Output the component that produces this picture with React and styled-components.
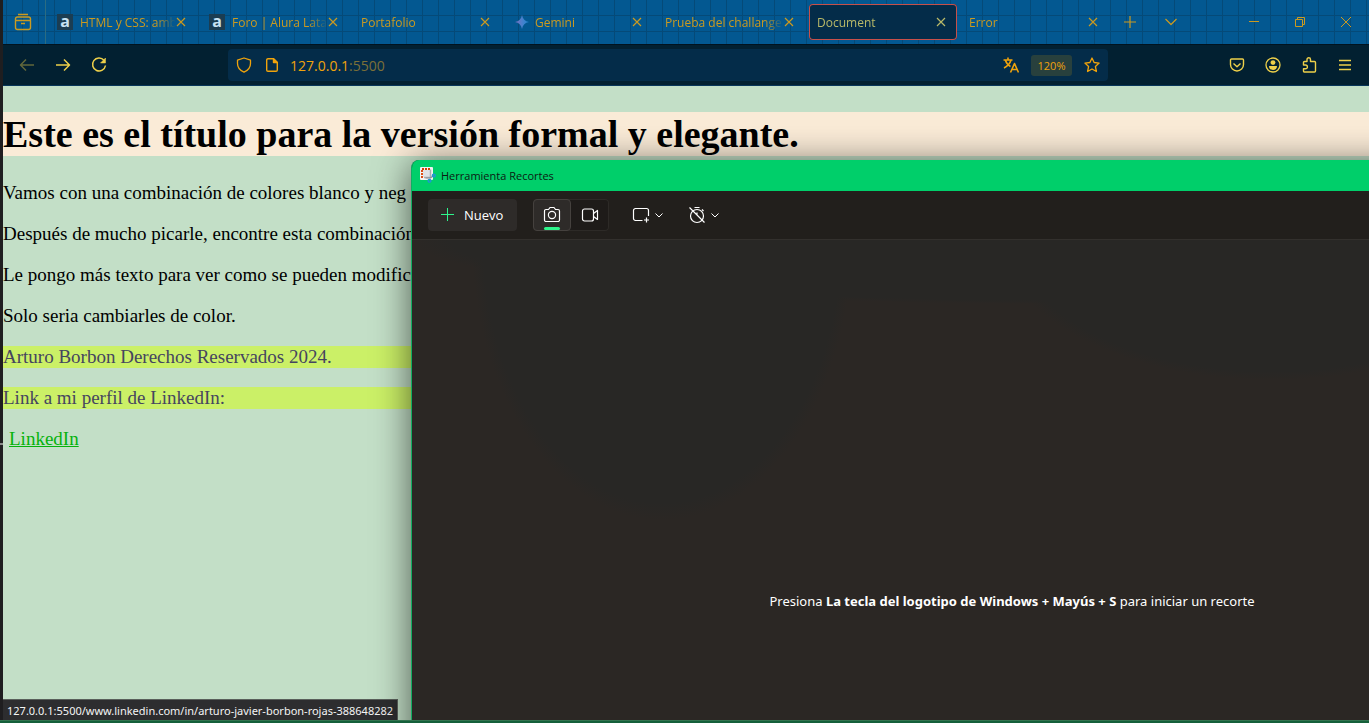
import styled, { createGlobalStyle, css } from "styled-components";

const ui = `"Open Sans", "Noto Sans", sans-serif`;
const uiWide = `"Noto Sans", "Open Sans", sans-serif`;

// 브라우저 탭 목록
const tabs = [
    { id: 1, title: "HTML y CSS: amb", icon: "alura" },
    { id: 2, title: "Foro | Alura Latam", icon: "alura" },
    { id: 3, title: "Portafolio" },
    { id: 4, title: "Gemini", icon: "gemini" },
    { id: 5, title: "Prueba del challange" },
    { id: 6, title: "Document", active: true },
    { id: 7, title: "Error" },
];

function App() {
    return (
        <Desktop>
            <GlobalStyle />
            <Edge />
            <Screen>
                <Browser />
                <SnippingTool />
            </Screen>
            <Taskbar />
        </Desktop>
    );
}

function Browser() {
    return (
        <BrowserWindow>
            <TabBar>
                <ArchiveButton aria-label="Firefox View">
                    <Icon $size={18} $width={1.4} viewBox="0 0 18 18">
                        <path d="M4 1.500h10M1.500 7V6a2 2 0 0 1 2-2h11a2 2 0 0 1 2 2v1M1.500 7.500v7a2 2 0 0 0 2 2h11a2 2 0 0 0 2-2v-7zM7 10.500h4" />
                    </Icon>
                </ArchiveButton>

                <Tabs>
                    {tabs.map((tab) => (
                        <Tab key={tab.id} $active={tab.active}>
                            {tab.icon === "alura" && <AluraIcon>a</AluraIcon>}
                            {tab.icon === "gemini" && <GeminiIcon />}
                            <TabTitle>{tab.title}</TabTitle>
                            <TabClose aria-label="Cerrar">
                                <Icon $size={10} viewBox="0 0 10 10">
                                    <path d="M1 1l8 8M9 1l-8 8" />
                                </Icon>
                            </TabClose>
                        </Tab>
                    ))}
                </Tabs>

                <TabButton aria-label="Nueva pestaña">
                    <Icon $size={12} viewBox="0 0 12 12">
                        <path d="M6 0v12M0 6h12" />
                    </Icon>
                </TabButton>
                <TabButton aria-label="Lista de pestañas">
                    <Icon $size={12} viewBox="0 0 12 12">
                        <path d="M0.500 3l5.500 5.500l5.500-5.500" />
                    </Icon>
                </TabButton>

                <WindowButtons>
                    <WindowButton aria-label="Minimizar">
                        <Icon $size={10} $width={1} viewBox="0 0 10 10">
                            <path d="M0 4.500h10" />
                        </Icon>
                    </WindowButton>
                    <WindowButton aria-label="Restaurar">
                        <Icon $size={10} $width={1} viewBox="0 0 10 10">
                            <path d="M0.500 2.500h7v7h-7zM2.500 2.500v-2h7v7h-2" />
                        </Icon>
                    </WindowButton>
                    <WindowButton aria-label="Cerrar ventana">
                        <Icon $size={10} $width={1} viewBox="0 0 10 10">
                            <path d="M0 0l10 10M10 0L0 10" />
                        </Icon>
                    </WindowButton>
                </WindowButtons>
            </TabBar>

            <Toolbar>
                <ToolButton aria-label="Atrás" disabled>
                    <Icon $size={16} $width={1.5} viewBox="0 0 16 16">
                        <path d="M15 8H1.500M7 2.500L1.500 8L7 13.500" />
                    </Icon>
                </ToolButton>
                <ToolButton aria-label="Adelante">
                    <Icon $size={16} $width={1.5} viewBox="0 0 16 16">
                        <path d="M1 8h13.500M9 2.500L14.500 8L9 13.500" />
                    </Icon>
                </ToolButton>
                <ToolButton aria-label="Recargar">
                    <Icon $size={16} $width={1.5} viewBox="0 0 16 16">
                        <path d="M13 3.200A6.500 6.500 0 1 0 14.500 8.500" />
                        <path d="M14.500 1v5h-5z" fill="currentColor" strokeWidth="0.5" />
                    </Icon>
                </ToolButton>

                <UrlBar>
                    <UrlButton aria-label="Protección">
                        <Icon $size={16} $width={1.3} viewBox="0 0 16 16">
                            <path d="M8 1L14.500 3.200V6.500C14.500 10.500 12 13.500 8 15.200C4 13.500 1.500 10.500 1.500 6.500V3.200z" />
                        </Icon>
                    </UrlButton>
                    <UrlButton aria-label="Información del sitio">
                        <Icon $size={14} $width={1.4} viewBox="0 0 14 14">
                            <path d="M3 0.700h5.500L12.300 4.500V12a1.300 1.300 0 0 1-1.300 1.300H3A1.300 1.300 0 0 1 1.700 12V2A1.300 1.300 0 0 1 3 0.700z" />
                            <path d="M8.500 0.700v3.800h3.800z" fill="currentColor" />
                        </Icon>
                    </UrlButton>
                    <Url>
                        127.0.0.1<span>:5500</span>
                    </Url>
                    <UrlButton aria-label="Traducir">
                        <Icon $size={16} $width={1.6} viewBox="0 0 16 16">
                            <path d="M0.500 3h9M5 0.500V3M8 3C7 6.500 4 9.500 1 11M2.500 3.500C3.500 6.500 5.500 8.500 7.500 9.500M7.500 15.500L11.500 6.500L15.500 15.500M9 12.500h5" />
                        </Icon>
                    </UrlButton>
                    <Zoom>120%</Zoom>
                    <UrlButton aria-label="Marcador">
                        <Icon $size={16} $width={1.3} viewBox="0 0 16 16">
                            <path d="M8 1l2.100 4.500l5 .6l-3.700 3.400l1 5L8 12l-4.400 2.500l1-5L.9 6.100l5-.6z" />
                        </Icon>
                    </UrlButton>
                </UrlBar>

                <ToolButton aria-label="Pocket">
                    <Icon $size={16} $width={1.4} viewBox="0 0 16 16">
                        <path d="M2.500 2h11a1 1 0 0 1 1 1v4.500a6.500 6.500 0 0 1-13 0V3a1 1 0 0 1 1-1zM4.500 6.500L8 9.700l3.500-3.200" />
                    </Icon>
                </ToolButton>
                <ToolButton aria-label="Cuenta">
                    <Icon $size={16} $width={1.3} viewBox="0 0 16 16">
                        <circle cx="8" cy="8" r="7" />
                        <circle cx="8" cy="5.600" r="2.400" fill="currentColor" stroke="none" />
                        <path d="M4 9h8c0 2.500-1.500 4-4 4s-4-1.500-4-4z" fill="currentColor" stroke="none" />
                    </Icon>
                </ToolButton>
                <ToolButton aria-label="Extensiones">
                    <Icon $size={16} $width={1.4} viewBox="0 0 16 16">
                        <path d="M2.500 8V5.500a1 1 0 0 1 1-1H6V2.500a1.500 1.500 0 0 1 3.500 0v2h4a1 1 0 0 1 1 1V14a1 1 0 0 1-1 1h-10a1 1 0 0 1-1-1v-2.200h2a1.900 1.900 0 0 0 0-3.800z" />
                    </Icon>
                </ToolButton>
                <ToolButton aria-label="Menú">
                    <Icon $size={12} $width={1.3} viewBox="0 0 12 12">
                        <path d="M0 1.500h12M0 6h12M0 10.500h12" />
                    </Icon>
                </ToolButton>
            </Toolbar>

            <Page>
                <Title>Este es el título para la versión formal y elegante.</Title>
                <Text>Vamos con una combinación de colores blanco y neg</Text>
                <Text>Después de mucho picarle, encontre esta combinación</Text>
                <Text>Le pongo más texto para ver como se pueden modific</Text>
                <Text>Solo seria cambiarles de color.</Text>
                <Text $marked>Arturo Borbon Derechos Reservados 2024.</Text>
                <Text $marked>Link a mi perfil de LinkedIn:</Text>
                <ProfileLink href="#linkedin">LinkedIn</ProfileLink>
                <Status>127.0.0.1:5500/www.linkedin.com/in/arturo-javier-borbon-rojas-388648282</Status>
            </Page>
        </BrowserWindow>
    );
}

function GeminiIcon() {
    return (
        <TabSvg viewBox="0 0 14 14">
            <defs>
                <linearGradient id="gemini" x1="0" y1="0" x2="1" y2="0">
                    <stop offset="0" stopColor="#7a6fc0" />
                    <stop offset="0.5" stopColor="#4a80cc" />
                    <stop offset="1" stopColor="#1e88d0" />
                </linearGradient>
            </defs>
            <path d="M7 0C7.800 4 10 6.200 14 7C10 7.800 7.800 10 7 14C6.200 10 4 7.800 0 7C4 6.200 6.200 4 7 0z" fill="url(#gemini)" />
        </TabSvg>
    );
}

function Chevron() {
    return (
        <Icon $size={8} $width={1} viewBox="0 0 8 8">
            <path d="M0.500 2.500L4 6l3.500-3.500" />
        </Icon>
    );
}

function SnippingTool() {
    return (
        <SnipWindow>
            <SnipHeader>
                <SnipLogo viewBox="0 0 16 16">
                    <rect x="0" y="0" width="13" height="13" rx="1" fill="#f3f3f3" />
                    <path d="M3 3h7v7H3z" fill="#dfe2e6" />
                    <path d="M2 11V2h9" fill="none" stroke="#d83b01" strokeWidth="1.800" strokeDasharray="2 1" />
                    <path d="M4 10.500h6.500V2.500" fill="none" stroke="#a9adb2" strokeWidth="1.500" />
                    <path d="M5.500 11h5l3-2.500" fill="none" stroke="#8a8d91" strokeWidth="1.200" />
                    <circle cx="13.800" cy="8.600" r="1.400" fill="none" stroke="#1f96d6" strokeWidth="1.400" />
                    <circle cx="9.500" cy="13.800" r="1.400" fill="none" stroke="#1f96d6" strokeWidth="1.400" />
                </SnipLogo>
                Herramienta Recortes
            </SnipHeader>

            <SnipToolbar>
                <NewButton>
                    <Icon $size={14} $width={1} viewBox="0 0 14 14">
                        <path d="M6.500 0v13M0 6.500h13" />
                    </Icon>
                    Nuevo
                </NewButton>

                <ModeGroup>
                    <ModeButton $active aria-label="Captura">
                        <Icon $size={18} $width={1.2} viewBox="0 0 18 18">
                            <path d="M3 3.500h2.500L7 1.500h4l1.500 2H15a1.500 1.500 0 0 1 1.500 1.500v9a1.500 1.500 0 0 1-1.500 1.500H3A1.500 1.500 0 0 1 1.500 14V5A1.500 1.500 0 0 1 3 3.500z" />
                            <circle cx="9" cy="9" r="3.600" />
                        </Icon>
                    </ModeButton>
                    <ModeButton aria-label="Grabar">
                        <Icon $size={18} $width={1.2} viewBox="0 0 18 18">
                            <rect x="1.500" y="3" width="11" height="12" rx="2" />
                            <path d="M12.500 7.500l4-3v9l-4-3" />
                        </Icon>
                    </ModeButton>
                </ModeGroup>

                <Menus>
                    <MenuButton aria-label="Forma de recorte">
                        <Icon $size={18} $width={1.2} viewBox="0 0 18 18">
                            <path d="M10.500 14.500H3.500a2 2 0 0 1-2-2v-8a2 2 0 0 1 2-2h11a2 2 0 0 1 2 2V10M14.500 11.500v5M12 14h5" />
                        </Icon>
                        <Chevron />
                    </MenuButton>
                    <MenuButton aria-label="Retraso">
                        <Icon $size={18} $width={1.2} viewBox="0 0 18 18">
                            <circle cx="9" cy="10" r="6.500" />
                            <path d="M6.500 1.500h5M14 3.500l1.500 1.500M9 6.500v2M1.500 1.500l15 15" />
                        </Icon>
                        <Chevron />
                    </MenuButton>
                </Menus>
            </SnipToolbar>

            <SnipBody>
                <p>
                    Presiona <strong>La tecla del logotipo de Windows + Mayús + S</strong> para iniciar un recorte
                </p>
            </SnipBody>
        </SnipWindow>
    );
}


const GlobalStyle = createGlobalStyle`
    * {
        box-sizing: border-box;
    }

    body {
        margin: 0;
        overflow: hidden;
    }

    button {
        display: flex;
        align-items: center;
        justify-content: center;
        padding: 0;
        border: 0;
        color: inherit;
        background: none;
        font: inherit;
    }
`;

const Desktop = styled.div`
    display: grid;
    grid-template-columns: 3px 1fr;
    grid-template-rows: 1fr 3px;
    height: 100vh;
    font-family: ${ui};
`;

const Edge = styled.div`
    background:
        linear-gradient(#8a8a8a, #8a8a8a) 0 443px / 3px 2px no-repeat,
        #1f1e20;
`;

const Screen = styled.div`
    position: relative;
    overflow: hidden;
`;

const Taskbar = styled.div`
    grid-column: 1 / -1;
    background: #15603a;
    border-top: 1px solid #33734f;
`;

const Icon = styled.svg`
    width: ${({ $size }) => $size}px;
    height: ${({ $size }) => $size}px;
    flex-shrink: 0;
    fill: none;
    stroke: currentColor;
    stroke-width: ${({ $width = 1.2 }) => $width};
    stroke-linejoin: round;
`;

const BrowserWindow = styled.div`
    display: flex;
    flex-direction: column;
    height: 100%;
`;

const TabBar = styled.div`
    display: flex;
    align-items: center;
    height: 44px;
    flex-shrink: 0;
    color: #cb9a20;
    background-color: #035891;
    background-image:
        linear-gradient(90deg, #054a78 1px, transparent 1px),
        linear-gradient(#054a78 1px, transparent 1px);
    background-size: 16px 16px;
    background-position: 3px 15px;
`;

const ArchiveButton = styled.button`
    && {
        width: 43px;
        height: 44px;
        padding-right: 2px;
        border-right: 1px solid #2b6c82;
    }
`;

const Tabs = styled.div`
    display: flex;
    flex: 0 1 1060px;
    gap: 4px;
    min-width: 0;
    margin-left: 3px;
`;

const Tab = styled.div`
    display: flex;
    align-items: center;
    flex: 1 1 0;
    min-width: 0;
    height: 36px;
    padding: 0 11px 0 8px;
    border-radius: 4px;
    font-size: 12px;

    ${({ $active }) => $active && css`
        color: #b9b968;
        background: #042c49;
        box-shadow: inset 0 0 0 1px #c8504a;
    `}
`;

const TabTitle = styled.span`
    flex: 1;
    overflow: hidden;
    white-space: nowrap;
    mask-image: linear-gradient(to left, transparent, #000 20px);
`;

const TabClose = styled.button`
    flex-shrink: 0;
`;

const AluraIcon = styled.span`
    width: 16px;
    height: 16px;
    flex-shrink: 0;
    margin-right: 7px;
    color: #c8e2f2;
    background: #1b3d52;
    font: bold 16px/15px "Open Sans", sans-serif;
    text-align: center;
`;

const TabSvg = styled.svg`
    width: 14px;
    height: 14px;
    flex-shrink: 0;
    margin: 0 6px 0 2px;
`;

const TabButton = styled.button`
    width: 41px;
    height: 36px;
`;

const WindowButtons = styled.div`
    display: flex;
    margin-left: auto;
`;

const WindowButton = styled.button`
    width: 46px;
    height: 44px;
`;

const Toolbar = styled.div`
    display: flex;
    align-items: center;
    height: 42px;
    flex-shrink: 0;
    padding: 0 6px;
    color: #eed04a;
    background: #022031;
    border-top: 1px solid #01131f;
    border-bottom: 1px solid #08365a;
`;

const ToolButton = styled.button`
    width: 36px;
    height: 32px;

    &:disabled {
        opacity: 0.4;
    }
`;

const UrlBar = styled.div`
    display: flex;
    align-items: center;
    flex: 1;
    height: 32px;
    margin: 0 111px;
    padding: 0 2px;
    color: #f0a30c;
    background: #042c49;
    border-radius: 4px;
`;

const UrlButton = styled.button`
    width: 28px;
    height: 28px;
`;

const Url = styled.div`
    flex: 1;
    margin-left: 4px;
    font-size: 14px;

    span {
        color: #7c7038;
    }
`;

const Zoom = styled.button`
    && {
        width: 41px;
        height: 21px;
        margin: 0 6px;
        background: #28403d;
        border-radius: 3px;
        font-size: 11px;
    }
`;

const Page = styled.main`
    position: relative;
    flex: 1;
    overflow: hidden;
    padding-top: 26px;
    background: #c3dfc7;
    color: #000;
    font-family: "Liberation Serif", serif;
`;

const Title = styled.h1`
    margin: 0 0 26px;
    background: #faebd7;
    font-size: 38px;
    line-height: 44px;
`;

const Text = styled.p`
    margin: 0 0 19px;
    font-size: 19px;
    line-height: 22px;

    ${({ $marked }) => $marked && css`
        color: #45455f;
        background: #cbf067;
    `}
`;

const ProfileLink = styled.a`
    margin-left: 6px;
    color: #06b20c;
    font-size: 19px;
    line-height: 22px;
`;

const Status = styled.div`
    position: absolute;
    left: 0;
    bottom: 0;
    height: 21px;
    padding: 0 4px;
    color: #f4f4f4;
    background: #2d2d2f;
    border-top: 1px solid #5a605b;
    border-right: 1px solid #5a605b;
    font: 11px/21px ${uiWide};
`;

// 화면 밖까지 이어지는 창
const SnipWindow = styled.section`
    position: absolute;
    top: 160px;
    left: 408px;
    right: -243px;
    bottom: -243px;
    display: flex;
    flex-direction: column;
    overflow: hidden;
    color: #fff;
    background: #2b2724;
    border-left: 1px solid #0fae62;
    border-radius: 8px;
    box-shadow: 0 4px 36px rgba(0, 0, 0, 0.6);
`;

const SnipHeader = styled.header`
    display: flex;
    align-items: center;
    gap: 5px;
    height: 31px;
    flex-shrink: 0;
    padding-left: 8px;
    color: #0c1a12;
    background: #00cf6a;
    font-size: 11px;
`;

const SnipLogo = styled.svg`
    width: 16px;
    height: 16px;
    margin-bottom: 2px;
`;

const SnipToolbar = styled.div`
    display: flex;
    align-items: center;
    gap: 16px;
    height: 49px;
    flex-shrink: 0;
    padding-left: 16px;
    background: #221f1c;
    border-bottom: 1px solid #33302d;
    font-size: 13px;
`;

const NewButton = styled.button`
    && {
        justify-content: flex-start;
        gap: 9px;
        width: 89px;
        height: 32px;
        padding-left: 13px;
        background: #2e2b29;
        border-radius: 4px;
        font-weight: 500;
    }

    svg {
        color: #2ef58c;
    }
`;

const ModeGroup = styled.div`
    display: flex;
    height: 32px;
    background: #1e1b19;
    box-shadow: inset 0 0 0 1px #2d2a27;
    border-radius: 4px;
`;

const ModeButton = styled.button`
    position: relative;
    width: 38px;
    height: 32px;

    ${({ $active }) => $active && css`
        && {
            background: #2e2b29;
            border: 1px solid #45413e;
            border-radius: 4px;
        }

        &::after {
            content: "";
            position: absolute;
            bottom: 0;
            width: 16px;
            height: 3px;
            background: #2ef58c;
            border-radius: 2px;
        }
    `}
`;

const Menus = styled.div`
    display: flex;
    gap: 16px;
    margin-left: 2px;
`;

const MenuButton = styled.button`
    && {
        gap: 5px;
        width: 40px;
        height: 32px;
    }
`;

const SnipBody = styled.div`
    display: flex;
    align-items: center;
    justify-content: center;
    flex: 1;
    padding-bottom: 2px;
    background:
        radial-gradient(ellipse 190px 280px at 250px 0, #282725 94%, transparent),
        radial-gradient(ellipse 640px 64px at 640px 0, #282725 94%, transparent),
        radial-gradient(ellipse 270px 140px at 860px 0, #282725 94%, transparent),
        #2b2724;
    font: 13px ${uiWide};

    p {
        margin: 0;
    }

    strong {
        font-weight: 700;
    }
`;

export default App;
